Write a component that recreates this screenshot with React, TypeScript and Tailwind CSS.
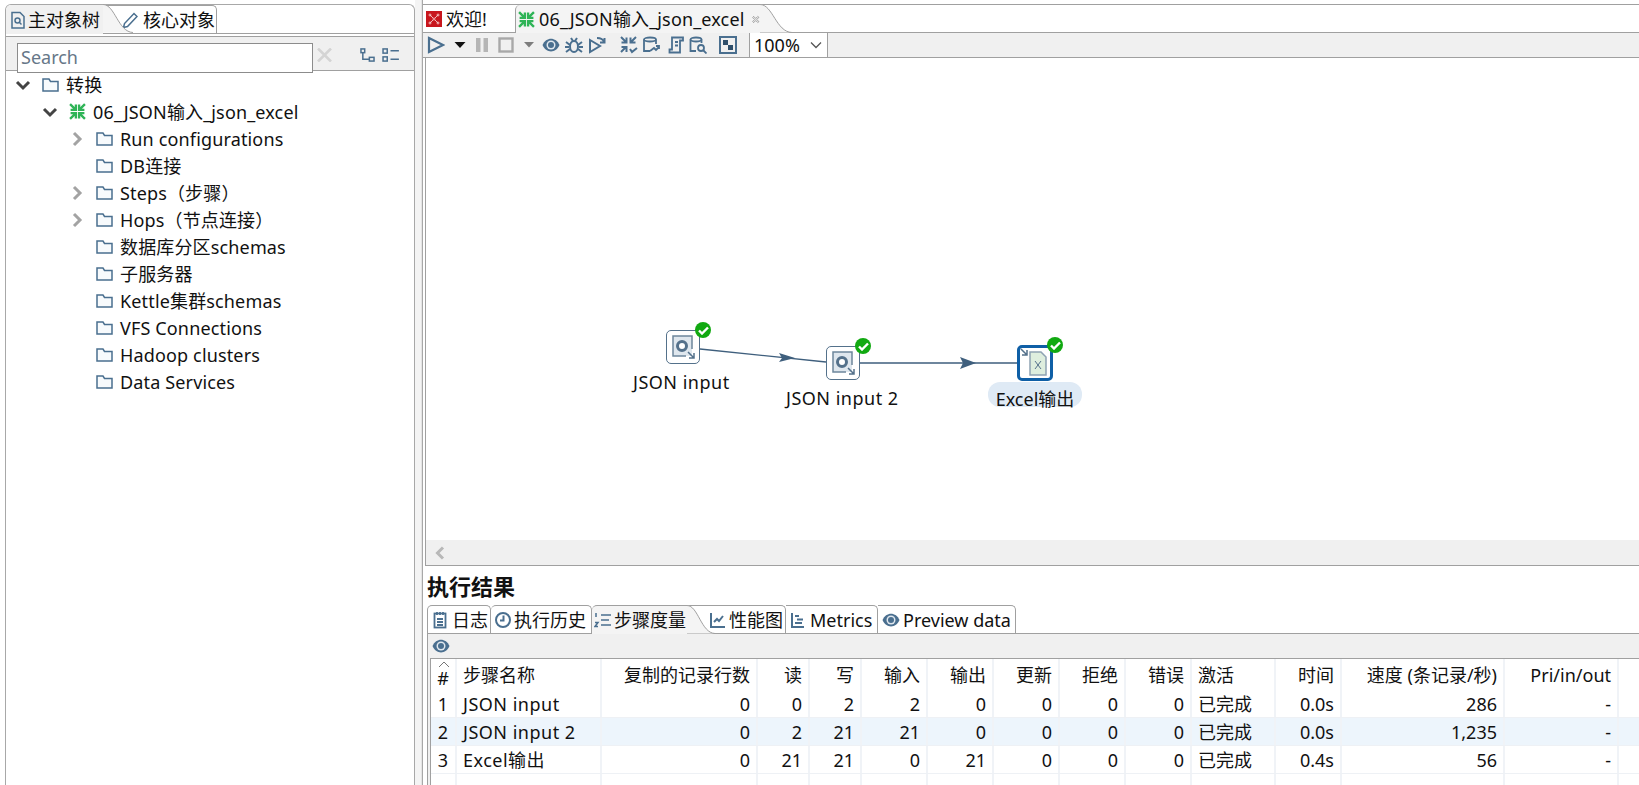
const font = "font-['Noto_Sans','Noto_Sans_CJK_SC',sans-serif]"

function Transform({ size = 17 }: { size?: number }) {
  return (
    <svg width={size} height={size} viewBox="0 0 16 16" fill="none" stroke="#2fb457" strokeWidth="2.2" className="shrink-0">
      <path d="M1 1l5 5M6.500 1.500V6.500H1.500M15 1l-5 5M9.500 1.500V6.500h5M1 15l5-5M6.500 14.500V9.500H1.500M15 15l-5-5M9.500 14.500V9.500h5" />
    </svg>
  )
}

function FolderIcon() {
  return (
    <svg width="17" height="14" viewBox="0 0 17 14" fill="none" stroke="#4a6f8f" strokeWidth="1.500">
      <path d="M1 1h6l1.500 2.500H16V13H1z" fill="#f7fafc" />
    </svg>
  )
}

function Eye({ w = 18 }: { w?: number }) {
  return (
    <svg width={w} height={w} viewBox="0 0 18 18" className="shrink-0">
      <path d="M0.500 9c3.500-8.500 13.500-8.500 17 0-3.500 8.500-13.500 8.500-17 0z" fill="#4a6f8f" />
      <circle cx="9" cy="9" r="4.500" fill="#dfe7ee" />
      <circle cx="9" cy="9" r="3" fill="#4a6f8f" />
    </svg>
  )
}

function TreeRow({ depth, open, label, icon }: { depth: number; open?: boolean; label: string; icon?: boolean }) {
  return (
    <div className="flex h-[27px] items-center" style={{ paddingLeft: depth * 27 + 9 }}>
      <span className="flex w-[26px] shrink-0 items-center">
        {open === true && (
          <svg width="16" height="12" viewBox="0 0 16 12" fill="none" stroke="#444444" strokeWidth="3"><path d="M2 3l6 6 6-6" /></svg>
        )}
        {open === false && (
          <svg width="12" height="16" viewBox="0 0 12 16" fill="none" stroke="#a3a3a3" strokeWidth="3" className="ml-[2px]"><path d="M3 2l6 6-6 6" /></svg>
        )}
      </span>
      <span className="flex w-[25px] shrink-0 items-center pl-[1px]">
        {icon ? <Transform /> : <FolderIcon />}
      </span>
      <span className="whitespace-nowrap tracking-[0.15px]">{label}</span>
    </div>
  )
}

function Badge({ x, y }: { x: number; y: number }) {
  return (
    <div className="absolute flex h-[16px] w-[16px] items-center justify-center rounded-full bg-[#11a911]" style={{ left: x, top: y }}>
      <svg width="11" height="9" viewBox="0 0 11 9" fill="none" stroke="#fff" strokeWidth="2.400"><path d="M1 4.500l3 3 6-6" /></svg>
    </div>
  )
}

function InputStep({ x, y, label, labelX }: { x: number; y: number; label: string; labelX: number }) {
  return (
    <>
      <div className="absolute flex h-[34px] w-[34px] items-center justify-center rounded-[5px] border border-[#54718b] bg-white" style={{ left: x, top: y }}>
        <svg width="28" height="28" viewBox="0 0 28 28" fill="none">
          <rect x="4" y="3" width="19" height="20" fill="#dfe7ee" />
          <path d="M23 16V3H4v20h13" stroke="#6d879c" strokeWidth="1.500" />
          <circle cx="13" cy="13" r="4.500" stroke="#54718b" strokeWidth="3" fill="#fff" />
          <path d="M19 19l6 6M25 20v5h-5" stroke="#54718b" strokeWidth="1.500" />
        </svg>
      </div>
      <Badge x={x + 29} y={y - 8} />
      <div className="absolute whitespace-nowrap tracking-[0.5px]" style={{ left: labelX, top: y + 43 }}>{label}</div>
    </>
  )
}

function Curve({ w }: { w: number }) {
  return (
    <svg width={w} height="29" viewBox={`0 0 ${w} 29`} fill="none" className="absolute left-full top-[-1px]">
      <path d={`M0 0.500C${w * 0.4} 0.500 ${w * 0.5} 28 ${w} 28.500H0z`} fill="#f4f4f4" />
      <path d={`M0 0.500C${w * 0.4} 0.500 ${w * 0.5} 28 ${w} 28.500`} stroke="#a0a0a0" />
    </svg>
  )
}

const tool = 'stroke-[#4a6f8f]'

function Toolbar() {
  return (
    <div className="flex h-[25px] items-center border-b border-[#a0a0a0] bg-[#f0f0f0] pl-[4px]">
      <svg width="18" height="18" viewBox="0 0 18 18" fill="none" className={tool} strokeWidth="2.200"><path d="M2 2l14 7-14 7z" /></svg>
      <svg width="12" height="18" viewBox="0 0 12 18" className="ml-[9px]"><path d="M0.500 6h11L6 12z" fill="#111" /></svg>
      <svg width="14" height="18" viewBox="0 0 14 18" className="ml-[9px]"><path d="M1 2h4.500v14H1zM8.500 2H13v14H8.500z" fill="#b5b5b5" /></svg>
      <svg width="16" height="18" viewBox="0 0 16 18" fill="none" className="ml-[9px]"><rect x="1.500" y="2.500" width="13" height="13" stroke="#a8a8a8" strokeWidth="2.400" /></svg>
      <svg width="14" height="18" viewBox="0 0 14 18" className="ml-[8px]"><path d="M2 6h10L7 11.500z" fill="#7d7d7d" /></svg>
      <span className="ml-[6px] flex"><Eye /></span>
      <svg width="18" height="18" viewBox="0 0 18 18" fill="none" className={`ml-[5px] ${tool}`} strokeWidth="2"><ellipse cx="9" cy="10.500" rx="4" ry="5.500" /><path d="M6 2l2 3M12 2l-2 3M1 6l4 3M17 6l-4 3M1 16l4-3M17 16l-4-3M0 11h4M14 11h4" /></svg>
      <svg width="18" height="18" viewBox="0 0 18 18" fill="none" className={`ml-[5px] ${tool}`} strokeWidth="2"><path d="M2 4l10 6-10 6zM9 2c3 0 6 1 7 4M16.500 2v4.500H12" /></svg>
      <svg width="18" height="18" viewBox="0 0 18 18" fill="none" className={`ml-[14px] ${tool}`} strokeWidth="2"><path d="M1 1l5 5M6.500 1.500v5h-5M16 1l-5 5M10.500 1.500v5h5M1 16l5-5M6.500 16v-5h-5M10 13l2 3 5-4" /></svg>
      <svg width="18" height="18" viewBox="0 0 18 18" fill="none" className={`ml-[4px] ${tool}`} strokeWidth="1.800"><ellipse cx="8" cy="3.500" rx="6" ry="2" /><path d="M2 3.500V15h6M14 3.500V8M8 15l4-3 2 2 3-3M14 10h3v3" /></svg>
      <svg width="18" height="18" viewBox="0 0 18 18" fill="none" className={`ml-[6px] ${tool}`} strokeWidth="1.800"><path d="M6 1.500h11v3h-3V16.500H3.500v-3H6zM9 6h3M9 9.500h3" /></svg>
      <svg width="18" height="18" viewBox="0 0 18 18" fill="none" className={`ml-[5px] ${tool}`} strokeWidth="1.800"><ellipse cx="7" cy="3.500" rx="5.500" ry="2" /><path d="M1.500 3.500V15H7M12.500 3.500V7" /><circle cx="12" cy="12" r="3" /><path d="M14 14l3.500 3.500" /></svg>
      <svg width="18" height="18" viewBox="0 0 18 18" fill="none" className="ml-[12px]"><rect x="1" y="1" width="16" height="16" stroke="#4a6f8f" strokeWidth="2" /><rect x="4" y="4" width="5" height="5" fill="#2f4f6b" /><rect x="9" y="9" width="5" height="5" fill="#2f4f6b" /></svg>
      <div className="ml-[12px] flex h-[24px] w-[79px] items-center border-x border-[#a0a0a0] bg-white pl-[4px]">
        <span>100%</span>
        <svg width="12" height="8" viewBox="0 0 12 8" fill="none" stroke="#555555" strokeWidth="1.300" className="ml-[10px]"><path d="M1 1.500l5 5 5-5" /></svg>
      </div>
    </div>
  )
}

const columns = [
  { w: 'w-[26px]', head: '#', align: 'text-center' },
  { w: 'w-[145px]', head: '步骤名称', align: 'text-left' },
  { w: 'w-[156px]', head: '复制的记录行数', align: 'text-right' },
  { w: 'w-[52px]', head: '读', align: 'text-right' },
  { w: 'w-[52px]', head: '写', align: 'text-right' },
  { w: 'w-[66px]', head: '输入', align: 'text-right' },
  { w: 'w-[66px]', head: '输出', align: 'text-right' },
  { w: 'w-[66px]', head: '更新', align: 'text-right' },
  { w: 'w-[66px]', head: '拒绝', align: 'text-right' },
  { w: 'w-[66px]', head: '错误', align: 'text-right' },
  { w: 'w-[84px]', head: '激活', align: 'text-left' },
  { w: 'w-[66px]', head: '时间', align: 'text-right' },
  { w: 'w-[163px]', head: '速度 (条记录/秒)', align: 'text-right' },
  { w: 'w-[114px]', head: 'Pri/in/out', align: 'text-right' },
]

const rows = [
  ['1', 'JSON input', '0', '0', '2', '2', '0', '0', '0', '0', '已完成', '0.0s', '286', '-'],
  ['2', 'JSON input 2', '0', '2', '21', '21', '0', '0', '0', '0', '已完成', '0.0s', '1,235', '-'],
  ['3', 'Excel输出', '0', '21', '21', '0', '21', '0', '0', '0', '已完成', '0.4s', '56', '-'],
  ['', '', '', '', '', '', '', '', '', '', '', '', '', ''],
]

function ResultTabs() {
  return (
    <div className="flex h-[29px] shrink-0 items-end border-b border-[#a0a0a0]">
      <div className="flex h-[28px] w-[64px] items-center gap-[5px] rounded-t-[5px] border border-b-0 border-[#a0a0a0] pl-[5px]">
        <svg width="14" height="18" viewBox="0 0 14 18" fill="none" stroke="#4a6f8f" strokeWidth="1.800" className="shrink-0"><rect x="1.500" y="2.500" width="11" height="14" /><path d="M4 1v3M7 1v3M10 1v3M4 8h6M4 11h6M4 14h6" /></svg>
        日志
      </div>
      <div className="flex h-[28px] w-[101px] items-center gap-[2px] rounded-t-[5px] border-r border-t border-[#a0a0a0] pl-[3px]">
        <svg width="18" height="18" viewBox="0 0 18 18" fill="none" stroke="#4a6f8f" strokeWidth="2" className="shrink-0"><circle cx="9" cy="9" r="7" /><path d="M9.500 4.500v5H6" /></svg>
        执行历史
      </div>
      <div className="relative -mb-px flex h-[29px] w-[95px] items-center gap-[2px] rounded-tl-[5px] border-t border-[#a0a0a0] bg-[#f4f4f4] pl-[2px]">
        <svg width="18" height="18" viewBox="0 0 18 18" fill="none" stroke="#4a6f8f" strokeWidth="1.500" className="shrink-0"><path d="M7 4h10M7 9h8M7 14h10M2 2v4M1 11.500h3L1 15.500h3" /></svg>
        <span className="whitespace-nowrap">步骤度量</span>
        <Curve w={28} />
      </div>
      <div className="flex h-[28px] w-[99px] items-center gap-[2px] rounded-tr-[5px] border-r border-t border-[#a0a0a0] pl-[22px]">
        <svg width="18" height="18" viewBox="0 0 18 18" fill="none" stroke="#4a6f8f" strokeWidth="2" className="shrink-0"><path d="M2 2v14h14M5 11l3-3 2 2 4-5" /></svg>
        性能图
      </div>
      <div className="flex h-[28px] w-[92px] items-center gap-[4px] rounded-tr-[5px] border-r border-t border-[#a0a0a0] pl-[4px]">
        <svg width="16" height="18" viewBox="0 0 16 18" fill="none" stroke="#4a6f8f" strokeWidth="2" className="shrink-0"><path d="M2 2v14h12M5 5h4M7 8.500h6M5 12h7" /></svg>
        Metrics
      </div>
      <div className="flex h-[28px] w-[138px] items-center gap-[3px] rounded-tr-[5px] border-r border-t border-[#a0a0a0] pl-[4px]">
        <Eye />
        <span className="whitespace-nowrap">Preview data</span>
      </div>
    </div>
  )
}

function ResultTable() {
  return (
    <div className="ml-[2px] min-h-0 flex-1 overflow-hidden border-l border-t border-[#a0a0a0] bg-white">
      <div className="flex h-[31px] items-center">
        {columns.map((c, i) => (
          <div key={c.head} className={`${c.w} ${c.align} relative flex h-full shrink-0 items-center border-r-2 border-[#f0f3f7] ${i === 0 ? 'px-0' : 'px-[6px]'}`}>
            {i === 0 && (
              <svg width="12" height="7" viewBox="0 0 12 7" fill="none" stroke="#777777" className="absolute left-[7px] top-[2px]"><path d="M1 6l5-5 5 5" /></svg>
            )}
            <span className={`w-full whitespace-nowrap ${i === 0 ? 'pt-[6px]' : ''}`}>{c.head}</span>
          </div>
        ))}
      </div>
      {rows.map((r, ri) => (
        <div key={ri} className={`flex h-[28px] items-center border-b border-[#eef1f5] ${ri === 1 ? 'bg-[#edf5fc]' : ''}`}>
          {r.map((v, i) => (
            <div key={i} className={`${columns[i].w} ${columns[i].align} flex h-full shrink-0 items-center border-r-2 border-[#f0f3f7] ${i === 0 ? 'px-0' : 'px-[6px]'}`}>
              <span className={`w-full whitespace-nowrap ${i === 1 ? 'tracking-[0.5px]' : ''}`}>{v}</span>
            </div>
          ))}
        </div>
      ))}
    </div>
  )
}

export default function App() {
  return (
    <div className={`flex h-[785px] w-[1639px] overflow-hidden bg-white text-[18px] leading-none text-[#111111] ${font}`}>
      {/* Left tree panel */}
      <div className="ml-[5px] mt-[4px] flex w-[410px] shrink-0 flex-col rounded-t-[6px] border-x border-t border-[#a8a8a8] bg-white">
        <div className="flex h-[29px] shrink-0 items-end border-b border-[#a0a0a0]">
          <div className="relative -mb-px flex h-[29px] w-[97px] items-center gap-[3px] rounded-tl-[5px] bg-[#f0f0f0] pl-[5px]">
            <svg width="14" height="18" viewBox="0 0 14 18" fill="none" stroke="#4a6f8f" strokeWidth="1.500" className="shrink-0"><path d="M1 1.500h8l4 4V17H1z" /><circle cx="6.500" cy="9.500" r="2.500" /><path d="M8.500 11.500l2 2" /></svg>
            <span className="whitespace-nowrap">主对象树</span>
            <Curve w={30} />
          </div>
          <div className="flex h-[28px] w-[114px] items-center gap-[5px] rounded-tr-[5px] border-r border-t border-[#a0a0a0] pl-[19px]">
            <svg width="16" height="18" viewBox="0 0 16 18" fill="none" stroke="#4a6f8f" strokeWidth="1.500" className="shrink-0"><path d="M1.500 16.500l1-4 9.500-10 3 3-9.500 10z" /></svg>
            <span className="whitespace-nowrap">核心对象</span>
          </div>
        </div>
        <div className="h-[2px] shrink-0 bg-white" />
        <div className="relative z-10 flex h-[35px] shrink-0 border-y border-[#a0a0a0] bg-[#f0f0f0]">
          <div className="ml-[11px] mt-[6px] flex h-[30px] w-[296px] shrink-0 items-center border border-[#8c8c8c] bg-white pl-[3px] pb-[2px] text-[#667788]">Search</div>
          <svg width="15" height="14" viewBox="0 0 15 14" fill="none" stroke="#d4d4d4" strokeWidth="2.600" className="ml-[4px] mt-[11px]"><path d="M1 0.500l13 13M14 0.500l-13 13" /></svg>
          <svg width="15" height="14" viewBox="0 0 16 15" fill="none" stroke="#4a6f8f" strokeWidth="1.600" className="ml-[28px] mt-[11px]"><rect x="1" y="1" width="4" height="4" /><rect x="10" y="10" width="5" height="4" /><path d="M3 5v7h7" /></svg>
          <svg width="17" height="14" viewBox="0 0 18 15" fill="none" stroke="#4a6f8f" strokeWidth="1.600" className="ml-[7px] mt-[11px]"><rect x="1" y="1" width="4.500" height="4.500" /><rect x="1" y="9.500" width="4.500" height="4.500" /><path d="M9 3h9M9 12h9" /></svg>
        </div>
        <div className="flex-1">
          <TreeRow depth={0} open label="转换" />
          <TreeRow depth={1} open icon label="06_JSON输入_json_excel" />
          <TreeRow depth={2} open={false} label="Run configurations" />
          <TreeRow depth={2} label="DB连接" />
          <TreeRow depth={2} open={false} label="Steps（步骤）" />
          <TreeRow depth={2} open={false} label="Hops（节点连接）" />
          <TreeRow depth={2} label="数据库分区schemas" />
          <TreeRow depth={2} label="子服务器" />
          <TreeRow depth={2} label="Kettle集群schemas" />
          <TreeRow depth={2} label="VFS Connections" />
          <TreeRow depth={2} label="Hadoop clusters" />
          <TreeRow depth={2} label="Data Services" />
        </div>
      </div>

      {/* Sash */}
      <div className="w-[7px] shrink-0 border-r border-[#e4e4e4] bg-[#f4f4f4]" />

      {/* Right editor + results */}
      <div className="flex min-w-0 flex-1 flex-col border-l border-[#a8a8a8]">
        <div className="mt-[4px] flex h-[29px] shrink-0 items-end border-y border-[#a0a0a0] bg-white">
          <div className="flex h-[27px] w-[92px] shrink-0 items-center gap-[4px] pl-[3px]">
            <span className="flex h-[16px] w-[16px] items-center justify-center bg-[#c8161d]">
              <svg width="12" height="12" viewBox="0 0 12 12" fill="none" stroke="#f6c9c9" strokeWidth="0.900"><path d="M2 2l3 3M10 2L7 5M2 10l3-3M10 10L7 7" /><circle cx="6" cy="6" r="1" /><circle cx="2" cy="2" r="1" /><circle cx="10" cy="2" r="1" /><circle cx="2" cy="10" r="1" /><circle cx="10" cy="10" r="1" /></svg>
            </span>
            欢迎!
          </div>
          <div className="relative -mb-px flex h-[28px] w-[245px] shrink-0 items-center rounded-tl-[5px] border-l border-[#a0a0a0] bg-[#f4f4f4] pl-[2px]">
            <Transform />
            <span className="ml-[4px] whitespace-nowrap tracking-[0.15px]">06_JSON输入_json_excel</span>
            <svg width="11" height="11" viewBox="0 0 11 11" fill="none" stroke="#777777" className="ml-[8px]"><path d="M1 2.500L2.500 1 5.500 4 8.500 1 10 2.500 7 5.500l3 3L8.500 10l-3-3-3 3L1 8.500l3-3z" /></svg>
            <Curve w={32} />
          </div>
        </div>
        <Toolbar />
        {/* Canvas */}
        <div className="relative ml-[2px] h-[508px] shrink-0 border-b border-l border-[#a0a0a0] bg-white">
          <svg className="absolute left-0 top-0 h-[480px] w-[700px]" fill="none" stroke="#3f5f7d" strokeWidth="1.300">
            <path d="M274 291L400 304M434 305H591" />
            <path d="M353 295l16 5-16 4 3-4z" fill="#3f5f7d" stroke="none" />
            <path d="M534 299l16 6-16 6 3-6z" fill="#3f5f7d" stroke="none" />
          </svg>
          <InputStep x={240} y={272} label="JSON input" labelX={207} />
          <InputStep x={400} y={288} label="JSON input 2" labelX={360} />
          <div className="absolute left-[591px] top-[287px] flex h-[36px] w-[36px] items-center justify-center rounded-[5px] border-[3px] border-[#0f5fa6] bg-white">
            <svg width="30" height="30" viewBox="0 0 30 30" fill="none">
              <path d="M10 4h11l5 5v18H10z" fill="#deeede" stroke="#8fa3b3" strokeWidth="1.500" />
              <path d="M15 13l6 8M21 13l-6 8" stroke="#54718b" strokeWidth="1" />
              <path d="M1 1l6 6M7 2v5H2" stroke="#54718b" strokeWidth="1.500" />
            </svg>
          </div>
          <Badge x={621} y={279} />
          <div className="absolute left-[562px] top-[324px] flex h-[25px] w-[94px] items-center justify-center rounded-[12px] bg-[#dfeaf5] pt-[8px] whitespace-nowrap">Excel输出</div>
          <div className="absolute bottom-0 left-0 right-0 flex h-[25px] items-center bg-[#f0f0f0] pl-[9px]">
            <svg width="10" height="14" viewBox="0 0 10 14" fill="none" stroke="#b8b8b8" strokeWidth="3"><path d="M8 1.500L2.500 7 8 12.500" /></svg>
          </div>
        </div>
        {/* Results */}
        <div className="flex min-h-0 flex-1 flex-col pl-[4px]">
          <div className="flex h-[39px] shrink-0 items-center pt-[1px] text-[22px] font-bold">执行结果</div>
          <ResultTabs />
          <div className="flex min-h-0 flex-1 flex-col border-l border-[#a0a0a0] bg-[#f0f0f0]">
            <div className="flex h-[24px] shrink-0 items-center pl-[4px]">
              <Eye />
            </div>
            <ResultTable />
          </div>
        </div>
      </div>
    </div>
  )
}
